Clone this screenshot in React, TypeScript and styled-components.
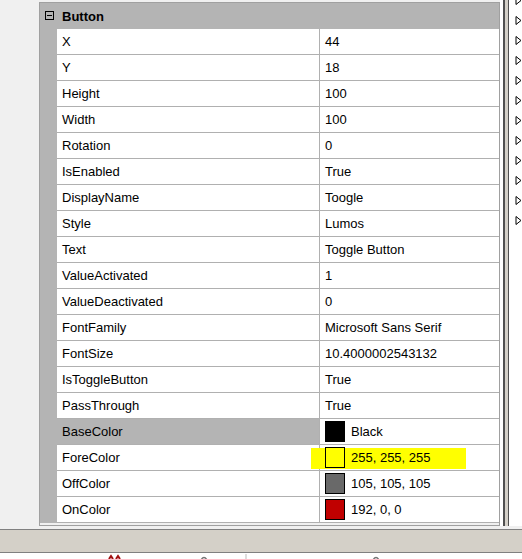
import styled, { createGlobalStyle } from "styled-components";

const GlobalStyle = createGlobalStyle`
  html, body {
    margin: 0;
    padding: 0;
    background: #f0f0f0;
  }
  body {
    font-family: "Liberation Sans", Arial, sans-serif;
    font-size: 13px;
    color: #000;
  }
`;

type Prop = {
  name: string;
  value: string;
  swatch?: string;
  selected?: boolean;
  marked?: boolean;
};

const props: Prop[] = [
  { name: "X", value: "44" },
  { name: "Y", value: "18" },
  { name: "Height", value: "100" },
  { name: "Width", value: "100" },
  { name: "Rotation", value: "0" },
  { name: "IsEnabled", value: "True" },
  { name: "DisplayName", value: "Toogle" },
  { name: "Style", value: "Lumos" },
  { name: "Text", value: "Toggle Button" },
  { name: "ValueActivated", value: "1" },
  { name: "ValueDeactivated", value: "0" },
  { name: "FontFamily", value: "Microsoft Sans Serif" },
  { name: "FontSize", value: "10.4000002543132" },
  { name: "IsToggleButton", value: "True" },
  { name: "PassThrough", value: "True" },
  { name: "BaseColor", value: "Black", swatch: "#000000", selected: true },
  { name: "ForeColor", value: "255, 255, 255", swatch: "#ffff00", marked: true },
  { name: "OffColor", value: "105, 105, 105", swatch: "#696969" },
  { name: "OnColor", value: "192, 0, 0", swatch: "#c00000" },
];

const App = () => {
  return (
    <>
      <GlobalStyle />
      <Screen>
        <Workspace>
          <LeftPane />
          <Panel>
            <Grid>
              <HeaderRow>
                <Gutter>
                  <Collapse>
                    <svg width="9" height="9" viewBox="0 0 9 9">
                      <rect x="0.5" y="0.5" width="8" height="8" fill="none" stroke="#000" />
                      <line x1="2" y1="4.5" x2="7" y2="4.5" stroke="#000" />
                    </svg>
                  </Collapse>
                </Gutter>
                <HeaderTitle>Button</HeaderTitle>
              </HeaderRow>
              {props.map((p) => (
                <Row key={p.name}>
                  <Gutter />
                  <NameCell $selected={p.selected}>{p.name}</NameCell>
                  <ValueCell>
                    {p.marked && <Marker />}
                    {p.swatch && <Swatch $color={p.swatch} />}
                    <ValueText $indent={!!p.swatch}>{p.value}</ValueText>
                  </ValueCell>
                </Row>
              ))}
            </Grid>
          </Panel>
          <RightStrip>
            <Gap />
            <DarkLine $w={2} />
            <SplitterFace />
            <DarkLine $w={1} />
            <ArrowColumn>
              {Array.from({ length: 12 }).map((_, i) => (
                <svg key={i} width="7" height="9" viewBox="0 0 7 9">
                  <polygon points="1,0.5 6,4.5 1,8.5" fill="#fff" stroke="#000" strokeWidth="1" />
                </svg>
              ))}
            </ArrowColumn>
          </RightStrip>
        </Workspace>
        <StatusBar />
        <ToolStrip>
          <ToolBit $left={108}>
            <svg width="14" height="6" viewBox="0 0 14 6">
              <path d="M1 5 L3 2 L5 5 M8 5 L10 2 L12 5" stroke="#a01010" strokeWidth="2" fill="none" />
            </svg>
          </ToolBit>
          <ToolBit $left={78}>
            <svg width="8" height="6" viewBox="0 0 8 6">
              <path d="M1 6 Q4 1 7 6" stroke="#777" strokeWidth="1.5" fill="none" />
            </svg>
          </ToolBit>
          <ToolBit $left={37}>
            <svg width="2" height="6" viewBox="0 0 2 6">
              <line x1="1" y1="0" x2="1" y2="6" stroke="#bbb" />
            </svg>
          </ToolBit>
          <ToolBit $left={125}>
            <svg width="8" height="6" viewBox="0 0 8 6">
              <path d="M1 6 Q4 1 7 6" stroke="#777" strokeWidth="1.5" fill="none" />
            </svg>
          </ToolBit>
        </ToolStrip>
      </Screen>
    </>
  );
};

export default App;

const Screen = styled.div`
  width: 522px;
  height: 559px;
  display: flex;
  flex-direction: column;
  background: #f0f0f0;
  overflow: hidden;
`;

const Workspace = styled.div`
  display: flex;
  height: 529px;
  flex-shrink: 0;
`;

const LeftPane = styled.div`
  width: 39px;
  flex-shrink: 0;
`;

const Panel = styled.div`
  width: 461px;
  height: 524px;
  margin-top: 2px;
  box-sizing: border-box;
  border: 1px solid #a0a0a0;
  background: #f0f0f0;
  flex-shrink: 0;
`;

const Grid = styled.div`
  display: flex;
  flex-direction: column;
  background: #b4b4b4;
`;

const HeaderRow = styled.div`
  display: flex;
  height: 26px;
  align-items: stretch;
`;

const Gutter = styled.div`
  width: 17px;
  flex-shrink: 0;
  background: #b4b4b4;
  display: flex;
  align-items: center;
`;

const Collapse = styled.span`
  display: flex;
  margin-left: 5px;
  margin-top: -1px;
`;

const HeaderTitle = styled.div`
  padding-left: 5px;
  font-weight: bold;
  line-height: 25px;
  padding-top: 1px;
`;

const Row = styled.div`
  display: flex;
  height: 26px;
`;

const NameCell = styled.div<{ $selected?: boolean }>`
  width: 263px;
  box-sizing: border-box;
  padding: 1px 0 0 5px;
  line-height: 24px;
  background: ${(p) => (p.$selected ? "#b4b4b4" : "#fff")};
  border-right: 1px solid #b0b0b0;
  border-bottom: 1px solid #b0b0b0;
  white-space: nowrap;
`;

const ValueCell = styled.div`
  position: relative;
  width: 179px;
  box-sizing: border-box;
  padding: 1px 0 0 5px;
  background: #fff;
  border-bottom: 1px solid #b0b0b0;
  display: flex;
  align-items: flex-start;
  white-space: nowrap;
`;

const Marker = styled.div`
  position: absolute;
  left: -9px;
  top: 3px;
  width: 155px;
  height: 21px;
  background: #ffff00;
`;

const Swatch = styled.div<{ $color: string }>`
  position: relative;
  width: 20px;
  height: 21px;
  margin-top: 1px;
  box-sizing: border-box;
  border: 1px solid #000;
  background: ${(p) => p.$color};
  flex-shrink: 0;
`;

const ValueText = styled.span<{ $indent: boolean }>`
  position: relative;
  line-height: 24px;
  margin-left: ${(p) => (p.$indent ? "6px" : "0")};
`;

const RightStrip = styled.div`
  flex: 1;
  height: 526px;
  display: flex;
`;

const Gap = styled.div`
  width: 3px;
  background: #fff;
`;

const DarkLine = styled.div<{ $w: number }>`
  width: ${(p) => p.$w}px;
  background: #505050;
`;

const SplitterFace = styled.div`
  width: 3px;
  background: #d4d0c8;
`;

const ArrowColumn = styled.div`
  flex: 1;
  background: #fff;
  display: flex;
  flex-direction: column;
  gap: 11px;
  padding-left: 6px;
  margin-top: -4px;
`;

const StatusBar = styled.div`
  height: 22px;
  flex-shrink: 0;
  background: #d4d0c8;
  border-top: 1px solid #808080;
  border-bottom: 1px solid #808080;
`;

const ToolStrip = styled.div`
  flex: 1;
  background: #fff;
  display: flex;
  align-items: flex-start;
  padding-top: 1px;
`;

const ToolBit = styled.span<{ $left: number }>`
  display: flex;
  margin-left: ${(p) => p.$left}px;
`;
